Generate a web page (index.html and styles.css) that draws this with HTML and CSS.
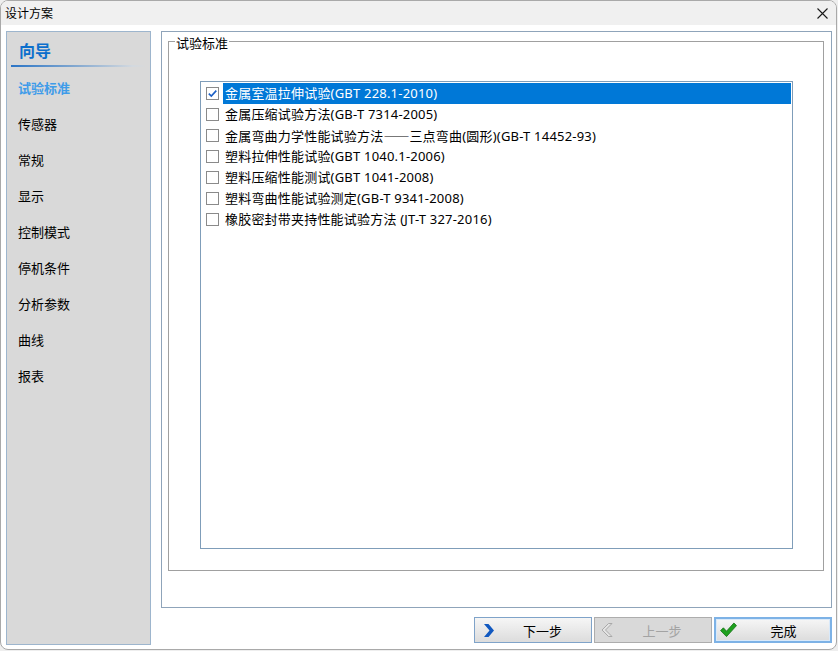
FILE: index.html
```html
<!DOCTYPE html>
<html lang="zh-CN">
<head>
<meta charset="utf-8">
<title>设计方案</title>
<link rel="stylesheet" href="styles.css">
</head>
<body>
<div class="window">
  <div class="titlebar">
    <span class="title">设计方案</span>
    <span class="close"><svg width="11" height="11" viewBox="0 0 11 11"><path d="M0.5 0.5L10.5 10.5M10.5 0.5L0.5 10.5" stroke="#1a1a1a" stroke-width="1.1" fill="none"/></svg></span>
  </div>
  <div class="content">
    <nav class="sidebar">
      <div class="nav-head">向导</div>
      <div class="nav-rule"></div>
      <div class="nav-item active">试验标准</div>
      <div class="nav-item">传感器</div>
      <div class="nav-item">常规</div>
      <div class="nav-item">显示</div>
      <div class="nav-item">控制模式</div>
      <div class="nav-item">停机条件</div>
      <div class="nav-item">分析参数</div>
      <div class="nav-item">曲线</div>
      <div class="nav-item">报表</div>
    </nav>
    <div class="right">
      <div class="panel">
        <div class="group">
          <span class="legend">试验标准</span>
          <div class="listbox">
            <div class="row selected"><span class="cb"><svg width="11" height="11" viewBox="0 0 11 11"><path d="M1.8 5.6L4.3 8.1L9.3 2.6" stroke="#1b5fc4" stroke-width="1.6" fill="none"/></svg></span><span class="label">金属室温拉伸试验(GBT 228.1-2010)</span></div>
            <div class="row"><span class="cb"></span><span class="label">金属压缩试验方法(GB-T 7314-2005)</span></div>
            <div class="row"><span class="cb"></span><span class="label">金属弯曲力学性能试验方法<span class="cjk">——</span>三点弯曲(圆形)(GB-T 14452-93)</span></div>
            <div class="row"><span class="cb"></span><span class="label">塑料拉伸性能试验(GBT 1040.1-2006)</span></div>
            <div class="row"><span class="cb"></span><span class="label">塑料压缩性能测试(GBT 1041-2008)</span></div>
            <div class="row"><span class="cb"></span><span class="label">塑料弯曲性能试验测定(GB-T 9341-2008)</span></div>
            <div class="row"><span class="cb"></span><span class="label">橡胶密封带夹持性能试验方法 (JT-T 327-2016)</span></div>
          </div>
        </div>
      </div>
      <div class="buttons">
        <button class="btn next" type="button"><svg width="10" height="13" viewBox="0 0 10 13"><path d="M0 0H4.5L10 6.5L4.5 13H0L5.5 6.5Z" fill="#1259c0"/></svg><span class="txt">下一步</span></button>
        <button class="btn prev" type="button" disabled><svg width="12" height="14" viewBox="0 0 12 14"><path d="M11 0.5H7.5L1 7L7.5 13.5H11L4.5 7Z" fill="#e4e4e4" stroke="#a9a9a9" stroke-width="1"/></svg><span class="txt">上一步</span></button>
        <button class="btn done" type="button"><svg width="17" height="16" viewBox="0 0 17 16"><path d="M0.6 8.6L3.4 5.8L6.5 9.2L13.9 1L16.5 3.6L6.5 14.6Z" fill="#1ea01e" stroke="#0f6f0f" stroke-width="0.8"/></svg><span class="txt">完成</span></button>
      </div>
    </div>
  </div>
</div>
</body>
</html>
```
FILE: styles.css
```css
* { box-sizing: border-box; }
html, body { margin: 0; padding: 0; }
body {
  width: 838px;
  height: 651px;
  background: #eeeeee;
  font-family: "Noto Sans", "Noto Sans CJK SC", sans-serif;
  font-size: 13px;
  color: #000;
  overflow: hidden;
}
.window {
  width: 837px;
  height: 650px;
  border: 1px solid #a9a9a9;
  border-radius: 8px;
  background: #fff;
  overflow: hidden;
  display: flex;
  flex-direction: column;
}
.titlebar {
  height: 24px;
  flex: none;
  background: #f0f0f0;
  display: flex;
  align-items: center;
  justify-content: space-between;
  padding-left: 4px;
}
.title {
  font-family: "Noto Sans CJK SC", sans-serif;
  font-size: 12px;
  line-height: 16px;
}
.close {
  width: 28px;
  height: 24px;
  display: flex;
  align-items: center;
  justify-content: center;
}
.content {
  flex: 1;
  display: flex;
  gap: 10px;
  padding: 6px 4px 4px 5px;
}
.sidebar {
  width: 145px;
  flex: none;
  border: 1px solid #9db5cd;
  background: #d9d9d9;
  display: flex;
  flex-direction: column;
  font-family: "Noto Sans CJK SC", sans-serif;
}
.nav-head {
  margin: 6px 0 0 12px;
  line-height: 24px;
  font-size: 16px;
  font-weight: bold;
  color: #0c6fcc;
}
.nav-rule {
  height: 2px;
  margin: 3px 4px 3px 4px;
  background: linear-gradient(to right, #2b75c6 0%, #7ea5cf 45%, #d3d9df 90%, #d9d9d9 100%);
}
.nav-item {
  height: 36px;
  line-height: 36px;
  padding-left: 11px;
  font-size: 13px;
  color: #000;
}
.nav-item.active {
  color: #3f9ce9;
  font-weight: bold;
}
.right {
  flex: 1;
  display: flex;
  flex-direction: column;
}
.panel {
  flex: 1;
  border: 1px solid #8fa4ba;
  padding: 9px 7px 36px 6px;
  display: flex;
  flex-direction: column;
}
.group {
  flex: 1;
  border: 1px solid #a0a0a0;
  display: flex;
  flex-direction: column;
}
.legend {
  align-self: flex-start;
  margin: -7px 0 0 6px;
  padding: 0 1px;
  background: #fff;
  line-height: 16px;
  font-family: "Noto Sans CJK SC", sans-serif;
}
.listbox {
  flex: 1;
  margin: 30px 30px 21px 31px;
  border: 1px solid #7f9db9;
  padding: 1px;
}
.row {
  height: 21px;
  display: flex;
  align-items: center;
  padding-left: 4px;
}
.cb {
  width: 13px;
  height: 13px;
  flex: none;
  border: 1px solid #8a8a8a;
  background: #fff;
  margin-right: 4px;
  display: flex;
}
.label {
  flex: 1;
  height: 21px;
  line-height: 21px;
  padding-left: 2px;
  white-space: nowrap;
  letter-spacing: 0.2px;
}
.cjk {
  font-family: "Noto Sans CJK SC", sans-serif;
  letter-spacing: 0;
}
.row.selected .label {
  background: #0078d7;
  color: #fff;
}
.buttons {
  display: flex;
  justify-content: flex-end;
  gap: 2px;
  margin: 9px 0 2px 0;
}
.btn {
  width: 118px;
  height: 26px;
  margin: 0;
  display: flex;
  align-items: center;
  border: 1px solid #7fa3c9;
  border-radius: 0;
  background: linear-gradient(#f6f6f6, #dcdcdc);
  font-family: "Noto Sans CJK SC", sans-serif;
  font-size: 13px;
  color: #000;
  padding: 0;
}
.btn svg { flex: none; }
.btn .txt { flex: 1; text-align: center; }
.btn.next { padding-left: 9px; }
.btn.prev {
  border-color: #adadad;
  background: #d9d9d9;
  color: #a3a3a3;
  padding-left: 6px;
}
.btn.done {
  border: 2px solid #7db2e6;
  box-shadow: inset 0 0 0 1px #d8e9fa;
  padding-left: 4px;
}
```
